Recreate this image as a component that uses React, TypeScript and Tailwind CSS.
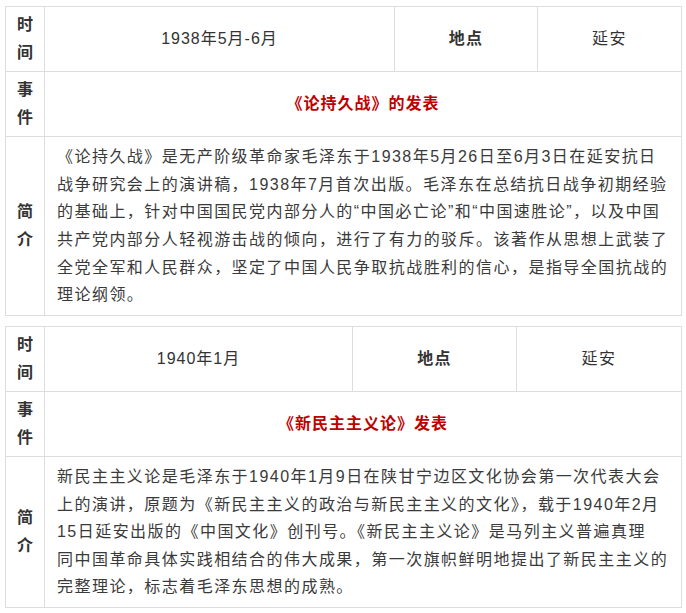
import React from "react";

const font = { fontFamily: '"Liberation Sans", "Noto Sans CJK SC", sans-serif' };

type Item = {
  time: string;
  cols: string;
  title: string;
  lines: string[];
  introH: string;
};

const items: Item[] = [
  {
    time: "1938年5月-6月",
    cols: "grid-cols-[39px_350px_143px_144px]",
    title: "《论持久战》的发表",
    introH: "h-[179px]",
    lines: [
      "《论持久战》是无产阶级革命家毛泽东于1938年5月26日至6月3日在延安抗日",
      "战争研究会上的演讲稿，1938年7月首次出版。毛泽东在总结抗日战争初期经验",
      "的基础上，针对中国国民党内部分人的“中国必亡论”和“中国速胜论”，以及中国",
      "共产党内部分人轻视游击战的倾向，进行了有力的驳斥。该著作从思想上武装了",
      "全党全军和人民群众，坚定了中国人民争取抗战胜利的信心，是指导全国抗战的",
      "理论纲领。",
    ],
  },
  {
    time: "1940年1月",
    cols: "grid-cols-[39px_308px_164px_165px]",
    title: "《新民主主义论》发表",
    introH: "h-[151px]",
    lines: [
      "新民主主义论是毛泽东于1940年1月9日在陕甘宁边区文化协会第一次代表大会",
      "上的演讲，原题为《新民主主义的政治与新民主主义的文化》，载于1940年2月",
      "15日延安出版的《中国文化》创刊号。《新民主主义论》是马列主义普遍真理",
      "同中国革命具体实践相结合的伟大成果，第一次旗帜鲜明地提出了新民主主义的",
      "完整理论，标志着毛泽东思想的成熟。",
    ],
  },
];

function Label({ a, b, h }: { a: string; b: string; h: string }) {
  return (
    <div
      className={`${h} border-r border-b border-[#dddddd] flex flex-col items-center justify-center text-[16px] leading-[28px] font-bold text-[#333333]`}
    >
      <span>{a}</span>
      <span>{b}</span>
    </div>
  );
}

function Table({ item }: { item: Item }) {
  return (
    <div className={`grid ${item.cols} w-[677px] border-l border-t border-[#dddddd]`}>
      <Label a="时" b="间" h="h-[65px]" />
      <div className="h-[65px] border-r border-b border-[#dddddd] flex items-center justify-center text-[16px] tracking-[1px] text-[#333333]">
        {item.time}
      </div>
      <div className="h-[65px] border-r border-b border-[#dddddd] flex items-center justify-center text-[16px] tracking-[1.2px] font-bold text-[#333333]">
        地点
      </div>
      <div className="h-[65px] border-r border-b border-[#dddddd] flex items-center justify-center text-[16px] tracking-[1.4px] text-[#333333]">
        延安
      </div>

      <Label a="事" b="件" h="h-[65px]" />
      <div className="col-span-3 h-[65px] border-r border-b border-[#dddddd] flex items-center justify-center text-[16px] tracking-[1px] font-bold text-[#c00000]">
        {item.title}
      </div>

      <Label a="简" b="介" h={item.introH} />
      <div
        className={`col-span-3 ${item.introH} border-r border-b border-[#dddddd] flex flex-col justify-center pl-[12px] text-[16px] leading-[27.6px] tracking-[1.46px] text-[#3a3a3a] whitespace-nowrap`}
      >
        {item.lines.map((l, i) => (
          <div key={i}>{l}</div>
        ))}
      </div>
    </div>
  );
}

export default function App() {
  return (
    <div className="w-[686px] h-[613px] bg-white pt-[6px] pl-[5px] flex flex-col gap-[10px] overflow-hidden" style={font}>
      {items.map((it, i) => (
        <Table key={i} item={it} />
      ))}
    </div>
  );
}
